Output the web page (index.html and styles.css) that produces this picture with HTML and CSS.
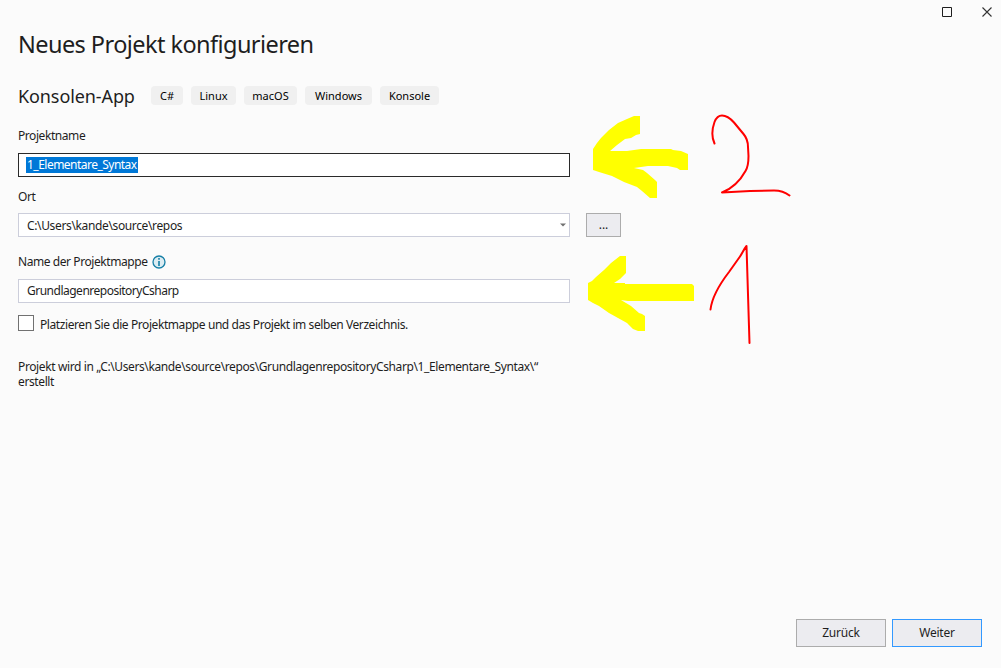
FILE: index.html
```html
<!DOCTYPE html>
<html lang="de">
<head>
<meta charset="utf-8">
<title>Neues Projekt konfigurieren</title>
<link rel="stylesheet" href="styles.css">
</head>
<body>
<div class="window">
  <header class="titlebar">
    <svg class="maximize" width="11" height="11" viewBox="0 0 11 11"><path d="M.5.5h9v9h-9z" fill="none" stroke="#1e1e1e"/></svg>
    <svg class="close" width="11" height="11" viewBox="0 0 11 11"><path d="M.5.5l9 9M9.500.5l-9 9" fill="none" stroke="#333" stroke-width="1.1"/></svg>
  </header>
  <main class="content">
    <h1 class="title"><span>Neues Projekt konfigurieren</span></h1>
    <div class="template">
      <h2 class="template-name"><span>Konsolen-App</span></h2>
      <ul class="tags">
        <li class="tag tag-csharp">C#</li>
        <li class="tag tag-linux">Linux</li>
        <li class="tag tag-macos">macOS</li>
        <li class="tag tag-windows">Windows</li>
        <li class="tag tag-console">Konsole</li>
      </ul>
    </div>
    <div class="label label-name"><span>Projektname</span></div>
    <div class="field field-active"><span class="selected">1_Elementare_Syntax</span></div>
    <div class="label label-location"><span>Ort</span></div>
    <div class="location">
      <div class="field combo"><span class="path">C:\Users\kande\source\repos</span>
        <svg width="6" height="4" viewBox="0 0 6 4"><path d="M0 .5h6L3 3.500z" fill="#717171"/></svg>
      </div>
      <div class="button browse">...</div>
    </div>
    <div class="label label-solution"><span>Name der Projektmappe</span>
      <svg width="14" height="14" viewBox="0 0 14 14"><circle cx="7" cy="7" r="6" fill="#dcecf2" stroke="#167fa6" stroke-width="1.3"/><path d="M7 3v1.700M7 6v5" stroke="#167fa6" stroke-width="1.600"/></svg>
    </div>
    <div class="field"><span class="solution">GrundlagenrepositoryCsharp</span></div>
    <div class="check"><i class="box"></i><span class="check-text">Platzieren Sie die Projektmappe und das Projekt im selben Verzeichnis.</span></div>
    <p class="summary"><span class="summary-path">Projekt wird in „C:\Users\kande\source\repos\GrundlagenrepositoryCsharp\1_Elementare_Syntax\“</span><br><span class="summary-end">erstellt</span></p>
  </main>
  <footer class="actions">
    <div class="button"><span>Zurück</span></div>
    <div class="button primary"><span>Weiter</span></div>
  </footer>
  <svg class="annotations" width="1001" height="668" viewBox="0 0 1001 668">
    <g fill="#ff0">
      <path d="M593 149L597 143L601 138L609 130L618 123L627 119L634 116H640V134L636 135L631 138L625 139L617 145L610 151L627 151L641 149H671L673 150L681 151L688 154V170H680L677 168L668 166H648L634 168L643 170L647 173L655 180L657 182V198H650L642 191L637 187L624 182L612 176L599 172L593 170Z"/>
      <path d="M588 283L592 281L596 277L604 270L611 263L620 256H626V273L620 279L614 283H625V284H692L694 286V301H628L621 300L626 303L631 306L639 313L642 314L645 316V331H638L633 329L627 323L618 318L609 313L599 306L593 303L588 300Z"/>
    </g>
    <g fill="none" stroke="#f00" stroke-width="2" stroke-linecap="round" stroke-linejoin="round">
      <path d="M714.500 143.500C711.500 137 712 129 714.500 122C716.500 117 719 115.500 722 115.500C726 115.500 730 118 734 122.500L743.500 134C746.500 137.500 748 141 748 147L748.500 156C748.500 164 748 167 745.500 171C740 181 731 189 722 192.500L750 191L774 190.500C781 190.500 785 192 789.500 195.500"/>
      <path d="M710.500 309.500C712 297 719 285 729 272L740 256.500C742.500 253 744 249 746.500 246L749.500 343"/>
    </g>
  </svg>
</div>
</body>
</html>
```
FILE: styles.css
```css
* { box-sizing: border-box; }
body { margin: 0; background: #fbfbfb; color: #1e1e1e; font: 12px/16px "Noto Sans", "Open Sans", sans-serif; white-space: nowrap; }
.window { position: relative; display: flex; flex-direction: column; width: 1001px; height: 668px; }
.titlebar { display: flex; justify-content: flex-end; gap: 29px; height: 27px; padding: 7px 8px 0 0; }
.content { flex: 1; padding-left: 18px; }
.title { height: 35px; margin: 0; font-size: 23.5px; font-weight: 400; line-height: 35px; letter-spacing: -.57px; }
.template { display: flex; height: 20px; margin-top: 24px; }
.template-name { width: 133px; margin: 0; font-size: 18px; font-weight: 400; line-height: 21px; letter-spacing: -.1px; }
.tags { display: flex; gap: 8px; margin: 0; padding: 0; list-style: none; }
.tag { height: 19px; border-radius: 4px; background: #f0f0f0; color: #000; font-size: 11px; line-height: 19px; text-align: center; }
.tag-csharp { width: 32px; }
.tag-linux { width: 45px; }
.tag-macos { width: 53px; }
.tag-windows { width: 67px; }
.tag-console { width: 59px; }
.label { display: flex; align-items: center; height: 16px; letter-spacing: -.43px; }
.label-name { margin: 22px 0 9px; }
.label-location { margin: 12px 0 8px; }
.label-solution { gap: 5px; margin: 17px 0 9px; }
.field { display: flex; align-items: center; width: 552px; height: 24px; padding-left: 8px; border: 1px solid #cccedb; background: #fff; }
.field-active { padding-left: 7px; border-color: #2a2a2a; }
.selected { padding: 0 1px; background: #0078d7; color: #fff; letter-spacing: -.52px; }
.path { padding-top: 2px; letter-spacing: -.36px; }
.solution { letter-spacing: -.5px; }
.location { display: flex; gap: 16px; }
.combo { justify-content: space-between; padding-right: 3px; }
.button { display: flex; align-items: center; justify-content: center; width: 90px; height: 28px; border: 1px solid #acacac; background: #ececf0; letter-spacing: -.2px; }
.browse { width: 35px; height: 24px; letter-spacing: 0; }
.primary { border-color: #3399ff; }
.check { display: flex; height: 18px; margin-top: 12px; gap: 6px; }
.box { width: 16px; height: 16px; border: 1px solid #717171; background: #fff; }
.check-text { line-height: 20px; letter-spacing: -.42px; }
.summary { margin: 26px 0 0; line-height: 15px; letter-spacing: -.385px; }
.actions { display: flex; justify-content: flex-end; gap: 6px; padding: 0 19px 21px 0; }
.annotations { position: absolute; left: 0; top: 0; pointer-events: none; }
```
